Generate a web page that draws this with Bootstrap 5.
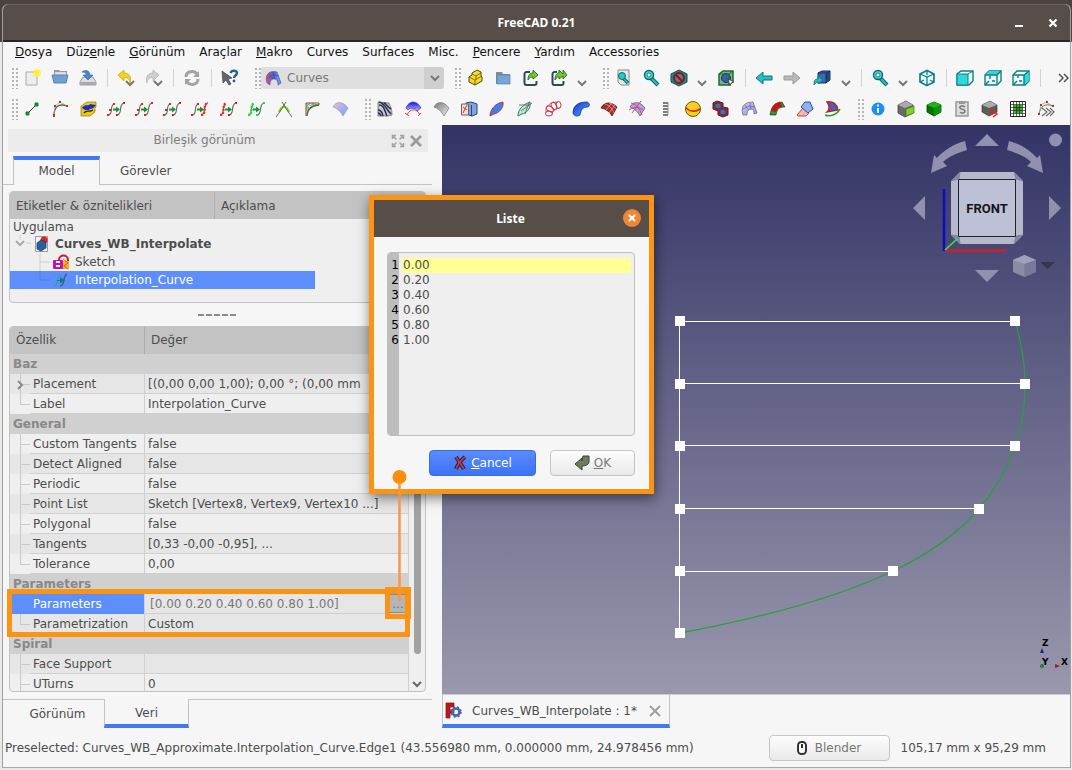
<!DOCTYPE html>
<html lang="tr">
<head>
<meta charset="utf-8">
<meta name="viewport" content="width=device-width, initial-scale=1">
<title>FreeCAD 0.21</title>
<link href="https://cdn.jsdelivr.net/npm/bootstrap@5.3.0/dist/css/bootstrap.min.css" rel="stylesheet">
<style>
  :root { --ink:#4d4d4d; --line:#c3c3c3; --accent:#4478f0; --mark:#fb9313; }
  body { font:12px/18px "DejaVu Sans", sans-serif; color:var(--ink);
         background:linear-gradient(#4c4341 42px,#e9e9e9 42px); padding:4px 2px 2px 3px; }
  a { color:inherit; text-decoration:none; }
  button { font:inherit; color:inherit; }
  .no-min { min-width:0; min-height:0; }
  .app-window { background:#f6f6f6; border-bottom:1px solid #a8a8a8; border-radius:6px 6px 0 0; overflow:hidden; box-shadow:-1px 0 #a0a0a0,1px 0 #a0a0a0; }
  .title-bar { height:38px; background:#574e49; border-top:1px solid #6d6561; border-bottom:2px solid #2b2523; }
  .caption-text { font:bold 12px/18px "Noto Sans", sans-serif; color:#fff; }
  .caption-btn { width:34px; height:34px; }
  .menu-row { height:20px; gap:14px; padding-left:12px; color:#111; line-height:20px; }
  .tool-row { height:31px; }
  .tool-row + .tool-row { height:32px; }
  .grip { flex:none; width:15px; height:22px; margin-left:2px; padding-left:8px; background:radial-gradient(circle,#b5b5b5 1px,transparent 1px) content-box 0 0/4px 4px; }
  .grip:first-child { margin-left:0; }
  .tool { flex:none; width:28px; height:28px; padding:0; border:0; display:grid; place-content:center; }
  .tool svg { width:18px; height:18px; display:block; }
  .tool-wide { width:31px; }
  .tool-drop { flex:none; width:19px; height:28px; padding:10px 0 0; border:0; }
  .tool-drop svg { width:18px; height:18px; display:block; }
  .rule { flex:none; width:10px; height:18px; background:linear-gradient(#d2d2d2,#d2d2d2) center/1px 100% no-repeat; }
  .bench { flex:none; width:183px; height:22px; background:linear-gradient(90deg,#dfdfdf 163px,#cfcfcf 163px); border-radius:3px; padding-left:3px; }
  .bench svg { width:18px; height:18px; flex:none; }
  .bench select { background:transparent; color:#777; appearance:none; height:22px; padding:0 0 0 5px; font:inherit; outline:0; }
  .side { flex:none; width:439px; }
  .dock-title { height:23px; margin:4px 14px 0 5px; background:#ebebeb; color:#7d7d7d; line-height:23px; gap:4px; padding-right:5px; }
  .dock-name { padding-left:14px; }
  .dock-tabs { height:29px; margin:4px 10px 0 0; padding-left:10px; background:linear-gradient(var(--line),var(--line)) bottom/100% 1px no-repeat; }
  .tab-on { width:87px; background:#f6f6f6; border:solid var(--line); border-width:0 1px; border-top:4px solid var(--accent); line-height:22px; }
  .tab-off { line-height:30px; padding-left:20px; }
  .box { margin:0 16px 0 6px; border:1px solid var(--line); border-radius:4px; background:#efefef; overflow:hidden; }
  .tree-box { margin-top:6px; height:112px; }
  .head-row { height:27px; line-height:28px; background:#c3c3c3; }
  .head-row > div { padding-left:6px; }
  .tree-col { flex:none; width:205px; border-right:1px solid #aeaeae; }
  .tree-root { line-height:16px; padding-left:3px; }
  .tree-item { height:18px; gap:5px; }
  .tree-picked { background:#5d8ffc; color:#fff; width:305px; }
  .splitter { height:23px; margin-right:11px; background:repeating-linear-gradient(90deg,#8b8b8b 0 6px,transparent 6px 8px) center/38px 2px no-repeat; }
  .props { table-layout:fixed; border-collapse:separate; border-spacing:0; line-height:20px; }
  .props th, .props td { height:20px; padding:0 0 0 3px; font-weight:400; white-space:nowrap; overflow:hidden; vertical-align:top; }
  .props thead th { height:27px; line-height:27px; background:#c3c3c3; padding-left:6px; }
  .props thead th:first-child { width:135px; border-right:1px solid #aeaeae; }
  .props td { border-right:1px solid #cfcfcf; background:linear-gradient(#cfcfcf,#cfcfcf) bottom/100% 1px no-repeat; }
  .props tbody th { border-right:1px solid #cfcfcf; padding-left:23px;
    background:linear-gradient(#cfcfcf,#cfcfcf) 20px 19px/200px 1px no-repeat,
      linear-gradient(#c9c9c9,#c9c9c9) 10px 10px/10px 1px no-repeat,
      linear-gradient(#c9c9c9,#c9c9c9) 10px 0/1px 20px no-repeat; }
  .props tbody tr.last-leaf th { background-size:200px 1px,10px 1px,1px 10px; }
  .props tbody tr.sec th { background:#d0d0d0; color:#888; font-weight:700; padding-left:3px; border:0; }
  .props tr.alt { background:#e6e6e6; }
  .props tbody tr.hot th { background:#5d8ffc; color:#fff; }
  .twisty { margin-left:-18px; width:10px; height:10px; margin-right:8px; }
  .edit-line { background:transparent; color:#777; padding:0 0 0 2px; height:19px; outline:0; font:inherit; min-width:0; }
  .more { width:20px; height:19px; background:#b5b5b5; border:1px solid #8b8b8b; color:#777; line-height:12px; padding:0; }
  .scroll-lane { flex:none; width:16px; padding-bottom:2px; }
  .scroll-thumb { width:7px; margin-bottom:27px; background:#a2a2a2; border-radius:4px; }
  .foot-tabs { height:29px; margin:7px 10px 0 0; line-height:29px; }
  .foot-off { width:101px; border-top:1px solid var(--line); padding-left:8px; }
  .foot-on { width:85px; border:solid var(--line); border-width:0 1px; border-bottom:4px solid var(--accent); }
  .foot-fill { border-top:1px solid var(--line); }
  .scene { background:linear-gradient(#333366,#9a98ad); }
  .doc-tabs { height:34px; border-top:1px solid #ccc; }
  .doc-tab { width:228px; border:solid var(--line); border-width:0 1px; border-bottom:4px solid var(--accent); padding:2px 0 0 2px; }
  .doc-name { padding-left:10px; }
  .status { height:39px; padding:0 24px 0 2px; gap:11px; }
  .soft-btn { height:26px; border:1px solid #c6c6c6; border-radius:4px; background:linear-gradient(#fdfdfd,#e9e9e9); color:#777; padding:0; }
  .w-blend { width:121px; }
  .mark-rows { left:4px; top:464px; width:403px; height:48px; border:5px solid var(--mark); pointer-events:none; }
  .mark-more { left:382px; top:462px; width:26px; height:32px; border:5px solid var(--mark); pointer-events:none; }
  .mark-lead { left:387px; top:343px; width:20px; height:140px; z-index:5; pointer-events:none; }
  .list-dialog { left:366px; top:70px; width:285px; height:299px; border:5px solid var(--mark); background:#f6f6f6; box-shadow:1px 4px 12px rgba(0,0,0,.5); z-index:4; }
  .list-title { height:37px; background:#574e49; padding-right:2px; }
  .list-title button { right:8px; top:9px; width:18px; height:18px; }
  .list-edit { margin:15px 14px 14px 13px; border:1px solid #bdbdbd; border-radius:4px; background:#efefef; line-height:15px; overflow:hidden; }
  .list-nums { width:11px; background:#bdbdbd; color:#000; padding-top:5px; }
  .list-text { resize:none; outline:0; color:var(--ink); padding:5px 0 0 4px; line-height:15px; overflow:hidden; background:linear-gradient(#ffff96,#ffff96) 3px 5px/calc(100% - 6px) 15px no-repeat; }
  .list-actions { gap:14px; padding:0 14px 13px 0; }
  .w-cancel { width:107px; background:linear-gradient(#5a8bff,#3c73f5); border-color:#3a6de0; color:#fff; }
  .w-ok { width:85px; }
</style>
</head>
<body class="vh-100 overflow-hidden">

<svg width="0" height="0" class="position-absolute" aria-hidden="true">
  <defs>
    <linearGradient id="gRB" x1="0" x2="1"><stop stop-color="#e0506a"/><stop offset=".5" stop-color="#4a62e0"/><stop offset="1" stop-color="#7fa4ee"/></linearGradient>
    <linearGradient id="gBlue" x1="0" x2="1" y2="1"><stop stop-color="#1030d8"/><stop offset="1" stop-color="#4fb4ff"/></linearGradient>
    <linearGradient id="gGrey" x1="0" x2="1" y2="1"><stop stop-color="#777"/><stop offset="1" stop-color="#eee"/></linearGradient>
    <linearGradient id="gDome" x1="0" x2="0" y2="1"><stop stop-color="#1212e8"/><stop offset="1" stop-color="#b8c0ff"/></linearGradient>
    <linearGradient id="gLav" x1="0" x2="1" y2="1"><stop stop-color="#f0c0d0"/><stop offset=".5" stop-color="#a9aef0"/><stop offset="1" stop-color="#7fa0f0"/></linearGradient>
  </defs>
  <symbol id="i-new" viewBox="0 0 18 18"><path d="M3 3h11v13H3z" fill="#ededed" stroke="#aaa"/><circle cx="14" cy="4" r="4" fill="#fff04a" opacity=".8"/><circle cx="14" cy="4" r="2" fill="#fff200"/></symbol>
  <symbol id="i-open" viewBox="0 0 18 18"><path d="M3 1h5l1 1h7v10H3z" fill="#9a9a9a"/><path d="M4 3h11v6H4z" fill="#ddd"/><path d="M1 6h16l-2 8H3z" fill="#6f9fd3" stroke="#5585bb"/></symbol>
  <symbol id="i-save" viewBox="0 0 18 18"><path d="M4 8h10l3 5v3H1v-3z" fill="#ddd" stroke="#999"/><path d="M1.500 13h15v3h-15z" fill="#aaa"/><path d="M3 3c4-3 8-1 8 3h3l-5 5-5-5h3c0-2-1-3-4-3z" fill="#4c86c6" stroke="#33669c" stroke-width=".6"/></symbol>
  <symbol id="i-undo" viewBox="0 0 18 18"><path d="M1 6l6-5v3c5 0 8 4 6 10 0-4-3-6-6-5v3z" fill="#f3d21e" stroke="#c6a412" stroke-width=".7"/><path d="M9 12l4 4 4-4" fill="none" stroke="#777" stroke-width="2"/></symbol>
  <symbol id="i-redo" viewBox="0 0 18 18"><path d="M14 6L8 1v3C3 4 0 8 2 14c0-4 3-6 6-5v3z" fill="#cfcfcf" stroke="#b0b0b0" stroke-width=".7"/><path d="M9 12l4 4 4-4" fill="none" stroke="#777" stroke-width="2"/></symbol>
  <symbol id="i-refresh" viewBox="0 0 18 18"><path d="M3 8c0-6 8-7 11-3M15 10c0 6-8 7-11 3" fill="none" stroke="#a3a3a3" stroke-width="3"/><path d="M16 2v6h-6zM2 16v-6h6z" fill="#a3a3a3"/></symbol>
  <symbol id="i-what" viewBox="0 0 18 18"><path d="M1 2l1 12 3-3 3 5 2-1-3-5 4-1z" fill="#5f676c" stroke="#333" stroke-width=".6"/><path d="M9.500 4c1-3 6-3 6.500 0 0 2.500-3 2.500-3 5" fill="none" stroke="#2a5d9c" stroke-width="2.400"/><circle cx="13" cy="12" r="1.400" fill="#2a5d9c"/></symbol>
  <symbol id="i-bench" viewBox="0 0 18 18"><path d="M3 14C0 5 6 1 13 3l4 11-3 2c0-4-1-6-4-6s-4 2-4 6z" fill="url(#gRB)" stroke="#5b5b8b" stroke-width=".7"/><path d="M5 5l4 5M9 3l2 7M3 9l6-3 6 1" fill="none" stroke="#444a90" stroke-width=".6"/></symbol>
  <symbol id="i-part" viewBox="0 0 18 18"><path d="M3 8l3-2V4l5-3 4 2v4l1 1v4l-7 4-6-3z" fill="#f3d929" stroke="#54490a"/><path d="M3 8l6 3 7-4M9 11v5M6 5l4 2 5-3M10 7v3" fill="none" stroke="#54490a" stroke-width=".7"/></symbol>
  <symbol id="i-group" viewBox="0 0 18 18"><path d="M2 3h6l1 2h7v10H2z" fill="#8c8c8c"/><path d="M3 6h13v9H3z" fill="#76a6d9" stroke="#4f7eb0" stroke-width=".7"/></symbol>
  <symbol id="i-link" viewBox="0 0 18 18"><path d="M8 3H4.500A2 2 0 0 0 2.500 5v9a2 2 0 0 0 2 2h8a2 2 0 0 0 2-2v-2" fill="none" stroke="#31475e" stroke-width="2"/><path d="M6 11c0-5 2-7 5-7V1l5 5-5 4V8c-2 0-3 0-5 3z" fill="#6fc62e" stroke="#20590f" stroke-width=".8"/></symbol>
  <symbol id="i-link2" viewBox="0 0 18 18"><path d="M7 3H4.500A2 2 0 0 0 2.500 5v9a2 2 0 0 0 2 2h7a2 2 0 0 0 2-2v-2" fill="none" stroke="#31475e" stroke-width="2"/><path d="M5 11c0-5 2-7 4-7V1l4 4V1l4 5-4 4V7l-4 3V8c-2 0-2 0-4 3z" fill="#6fc62e" stroke="#20590f" stroke-width=".8"/></symbol>
  <symbol id="i-drop" viewBox="0 0 18 18"><path d="M5 7l4 4 4-4" fill="none" stroke="#777" stroke-width="2"/></symbol>
  <symbol id="i-fit" viewBox="0 0 18 18"><path d="M4 1h11v15H7l-3-3z" fill="#e9e9e9" stroke="#888"/><path d="M9 9l5 5" stroke="#0b6c70" stroke-width="3.500"/><path d="M9 9l4.500 4.500" stroke="#29c9c9" stroke-width="1.500"/><circle cx="8" cy="7" r="3.500" fill="#29c9c9" stroke="#0b6c70"/></symbol>
  <symbol id="i-zoom" viewBox="0 0 18 18"><path d="M9 9l7 7" stroke="#096569" stroke-width="4"/><path d="M9 9l6.500 6.500" stroke="#25c2c6" stroke-width="2"/><circle cx="7" cy="6" r="4.500" fill="#43dde0" stroke="#096569" stroke-width="1.400"/><circle cx="7" cy="6" r="2" fill="#f0ffff" stroke="#096569" stroke-width=".8"/></symbol>
  <symbol id="i-style" viewBox="0 0 18 18"><path d="M1 5l8-4 8 4v8l-8 4-8-4z" fill="#168a90" stroke="#0a4e54"/><circle cx="9" cy="9" r="5" fill="#6b7682" stroke="#8f1414" stroke-width="2"/><path d="M5.500 5.500l7 7" stroke="#8f1414" stroke-width="2"/></symbol>
  <symbol id="i-boxsel" viewBox="0 0 18 18"><path d="M2 5l4-3h10v10l-4 4H2z" fill="#7fae93" stroke="#16702d" stroke-width="1.500"/><circle cx="9" cy="9" r="4.500" fill="#3c5f9e" stroke="#1e3567"/><path d="M2 5h10v11M12 5l4-3" fill="none" stroke="#16702d"/><path d="M11 10l6 3-3 1-1 3z" fill="#fff" stroke="#222" stroke-width=".7"/></symbol>
  <symbol id="i-back" viewBox="0 0 18 18"><path d="M1 9l7-6v4h9v4H8v4z" fill="#22bfc4" stroke="#0a777b"/></symbol>
  <symbol id="i-fwd" viewBox="0 0 18 18"><path d="M17 9l-7-6v4H1v4h9v4z" fill="#b8b8b8" stroke="#9d9d9d"/></symbol>
  <symbol id="i-goto" viewBox="0 0 18 18"><path d="M5 4l4-2h8v9l-4 3H5z" fill="#3f69ad" stroke="#17305b"/><path d="M13 4l4-2v9l-4 3z" fill="#234680"/><path d="M5 4h8v10M13 4l4-2" fill="none" stroke="#17305b"/><path d="M1 16c0-5 1-6 4-6V7l5 4-5 4v-2c-2 0-2 1-4 3z" fill="#27b6bb" stroke="#0a6a6e" stroke-width=".7"/></symbol>
  <symbol id="i-iso" viewBox="0 0 18 18"><path d="M2 5l7-3.500L16 5v8l-7 3.500L2 13z" fill="#eafcfc" stroke="#0d7e84" stroke-width="1.700"/><path d="M2 5l7 3 7-3M9 8v8.500M9 1.500V6M2 13l4-2M16 13l-4-2" fill="none" stroke="#0d7e84" stroke-width="1.300"/></symbol>
  <symbol id="i-front" viewBox="0 0 18 18"><path d="M1 5l4-3h12v10l-4 4H1z" fill="#eafcfc" stroke="#0d7e84" stroke-width="1.400"/><path d="M1 5h11v11H1z" fill="#2bd9dd" stroke="#0d7e84"/><path d="M12 5l5-3" stroke="#0d7e84"/></symbol>
  <symbol id="i-top" viewBox="0 0 18 18"><path d="M1 6l4-4h12v10l-4 4H1z" fill="#eafcfc" stroke="#0d7e84" stroke-width="1.400"/><path d="M1 6l4-4h12l-4 4z" fill="#2bd9dd"/><path d="M1 6h12v10M13 6l4-4M6 7v3M1 16l4-4M8 12h3" fill="none" stroke="#0d7e84" stroke-width="1.400"/></symbol>
  <symbol id="i-right" viewBox="0 0 18 18"><path d="M1 6l4-4h12v10l-4 4H1z" fill="#eafcfc" stroke="#0d7e84" stroke-width="1.400"/><path d="M12 6l5-4v10l-5 4z" fill="#2bd9dd"/><path d="M1 6h11v10M12 6l5-4M6 6v3M1 16l4-4M7 12h3" fill="none" stroke="#0d7e84" stroke-width="1.400"/></symbol>
  <symbol id="i-line" viewBox="0 0 18 18"><path d="M4 14L14 4" stroke="#333"/><path d="M3 12h3v3H3zM12 3h3v3h-3z" fill="#138a2a" stroke="#138a2a"/></symbol>
  <symbol id="i-editsp" viewBox="0 0 18 18"><path d="M3 16C3 7 7 3 16 6" fill="none" stroke="#357a35" stroke-width="1.300"/><path d="M3 15L4 6l5-4 7 4" fill="none" stroke="#9a9a9a" stroke-width=".8"/><path d="M2 14h2v3H2zM3 5h2v2H3zM8 1h2v2H8zM15 5h2v2h-2z" fill="#d22"/></symbol>
  <symbol id="i-join" viewBox="0 0 18 18"><path d="M2 6l6-4h9v5l-1 1v4l-5 4H2v-5z" fill="#f0c612" stroke="#7b6810" stroke-width=".6"/><path d="M3 8c3-5 6-1 8-4l6 1c-3 5-6 3-7 5H6z" fill="#1732c9"/><path d="M5 13c3-4 5 0 9-3" fill="none" stroke="#222" stroke-width="1.300"/></symbol>
  <symbol id="i-sp" viewBox="0 0 18 18"><path d="M1 15C7 15 2 6 7 4M10 15C16 15 11 4 17 3" fill="none" stroke="#666" stroke-width="1.100"/><path d="M6 8.500h3V6.500l4 3-4 3V10.500H6z" fill="#1a8f2c"/></symbol>
  <symbol id="i-sp1" viewBox="0 0 18 18"><use href="#i-sp"/><path d="M0 14h2v2H0zM2 9h2v2H2zM6 3h2v2H6zM9 14h2v2H9zM16 2h2v2h-2z" fill="#e02020"/></symbol>
  <symbol id="i-sp2" viewBox="0 0 18 18"><use href="#i-sp"/><path d="M1 15C7 15 2 6 7 3" fill="none" stroke="#f02828" stroke-width="2.200" stroke-dasharray="2 1"/><path d="M9 14h2v2H9zM16 2h2v2h-2z" fill="#e02020"/></symbol>
  <symbol id="i-sp3" viewBox="0 0 18 18"><use href="#i-sp"/><path d="M10 15C16 15 11 4 17 3" fill="none" stroke="#f02828" stroke-width="2.400" stroke-dasharray="2 1"/><path d="M0 14h2v2H0zM6 3h2v2H6z" fill="#e02020"/></symbol>
  <symbol id="i-sp4" viewBox="0 0 18 18"><use href="#i-sp"/><path d="M1 15C7 15 2 6 7 3" fill="none" stroke="#20e040" stroke-width="2.400" stroke-dasharray="2 1"/><path d="M9 14h2v2H9zM16 2h2v2h-2z" fill="#20e040"/></symbol>
  <symbol id="i-blend" viewBox="0 0 18 18"><path d="M4 12C7 5 11 5 14 12" fill="none" stroke="#7ae01a" stroke-width="2.200"/><path d="M1 17c4-5 6-9 10-15M17 17C13 12 11 8 7 2" fill="none" stroke="#555" stroke-width=".9"/></symbol>
  <symbol id="i-comb" viewBox="0 0 18 18"><path d="M4 16C4 9 9 5 16 5" fill="none" stroke="#236b23" stroke-width="1.400"/><path d="M3 16V3h13v2" fill="none" stroke="#b0453a"/><path d="M3 3l7 4M3 3l4 7M3 5l3 6M6 3l7 3M3 8l2 5M9 3l5 2" stroke="#54845a" fill="none" stroke-width=".8"/></symbol>
  <symbol id="i-fan" viewBox="0 0 18 18"><path d="M2 7C5 1 12 1 17 8l-5 8C10 12 6 8 2 7z" fill="url(#gLav)" stroke="#8890b0" stroke-width=".6"/></symbol>
  <symbol id="i-zebra" viewBox="0 0 18 18"><path d="M2 2l11 1c1 3 3 5 3 12l-4 1H2z" fill="#c5c8d4" stroke="#444" stroke-width=".6"/><path d="M3 5c5 0 5 4 8 11M2 10c4 0 4 3 5 6M3 2c6 1 6 6 12 12M8 3c3 1 3 4 7 6M2 13c2 0 2 1 3 3" fill="none" stroke="#2b3144" stroke-width="1.500"/></symbol>
  <symbol id="i-trim" viewBox="0 0 18 18"><path d="M2 8C5 0 13 0 17 8l-4 3C12 8 7 7 4 10z" fill="url(#gDome)" stroke="#222299" stroke-width=".6"/><path d="M3 15c3-7 10-7 13 0M1 13l4 3M14 16l3-3" fill="none" stroke="#e33"/></symbol>
  <symbol id="i-gfan" viewBox="0 0 18 18"><path d="M2 7C5 1 12 1 17 8l-5 8C10 12 6 8 2 7z" fill="url(#gGrey)" stroke="#777" stroke-width=".7"/></symbol>
  <symbol id="i-map" viewBox="0 0 18 18"><path d="M6 3l5-1 6 2v10l-5 2-6-2z" fill="#7ea6dd" stroke="#29486f"/><path d="M1.500 4h7v11h-7z" fill="#f3dede" stroke="#666"/><path d="M3 13l4-8M3 7l4 3" stroke="#d33"/><path d="M11.500 5v11" stroke="#29486f"/></symbol>
  <symbol id="i-loft" viewBox="0 0 18 18"><path d="M2 16C2 10 7 3 15 2c1 6-4 11-9 12z" fill="#3f7fe8" stroke="#c8324d"/></symbol>
  <symbol id="i-profile" viewBox="0 0 18 18"><path d="M2 16C2 10 6 5 14 2c1 6-3 11-8 12z" fill="#b9f0bd" stroke="#3c6b8b"/><path d="M3 5h10M5 11l11-8M13 3l-4 11" fill="none" stroke="#666" stroke-width=".9"/></symbol>
  <symbol id="i-pipe" viewBox="0 0 18 18"><path d="M2 13C1 6 6 2 14 2M8 15c0-5 3-7 8-7" fill="none" stroke="#888"/><g fill="none" stroke="#d8304e"><ellipse cx="5" cy="13.500" rx="3.500" ry="2.500"/><ellipse cx="6" cy="9" rx="4" ry="2.500" transform="rotate(30 6 9)"/><ellipse cx="10" cy="6" rx="2.500" ry="4" transform="rotate(-25 10 6)"/><ellipse cx="14.500" cy="5" rx="2.500" ry="3.500"/></g></symbol>
  <symbol id="i-sweep" viewBox="0 0 18 18"><path d="M1 13C1 5 7 2 15 2c3 1 3 4 1 5-6 0-7 3-8 8-3 2-6 1-7-2z" fill="url(#gBlue)" stroke="#102070" stroke-width=".7"/></symbol>
  <symbol id="i-gordon" viewBox="0 0 18 18"><path d="M1 8C4 2 11 1 17 7l-5 9C10 12 6 9 1 8z" fill="#a82c2c" stroke="#3d0d0d" stroke-width=".7"/><path d="M5 4c4 1 7 4 9 9M9 3c3 1 5 3 7 6M6 10l6-7M9 13l6-8" fill="none" stroke="#e8a0a0" stroke-width=".8"/></symbol>
  <symbol id="i-segment" viewBox="0 0 18 18"><path d="M2 7C5 1 12 1 17 8l-5 8C10 12 6 8 2 7z" fill="#a9a5ee" stroke="#556" stroke-width=".7"/><path d="M3 3c5 1 9 6 11 12M4 13l9-12M1 10c6-4 11-3 15 1" fill="none" stroke="#e04060"/></symbol>
  <symbol id="i-coil" viewBox="0 0 18 18"><path d="M7 3h5M7 6h5M7 9h5M7 12h5M7 15h5" stroke="#555" stroke-width="1.600"/><path d="M12 2v13" stroke="#888" stroke-width=".8"/></symbol>
  <symbol id="i-ball" viewBox="0 0 18 18"><circle cx="9" cy="9" r="7.500" fill="#f5cf1c" stroke="#6b5a0e"/><path d="M2 8c4 4 10 4 14 1" fill="none" stroke="#d62a1a" stroke-width="1.600"/></symbol>
  <symbol id="i-compound" viewBox="0 0 18 18"><path d="M1 3l4-2 6 2v4l5 1v7l-5 2-5-2v-4l-5-2z" fill="#a7242c" stroke="#6a1219"/><path d="M3 4l3-1 3 1v4L6 9 3 8zM8 10l3-1 3 1v4l-3 1-3-1z" fill="#426fa8" stroke="#1d3558" stroke-width=".7"/></symbol>
  <symbol id="i-reflect" viewBox="0 0 18 18"><path d="M3 15C0 6 5 2 13 2l4 11-3 1c0-4-1-5-3-5s-4 2-4 6z" fill="url(#gLav)" stroke="#667" stroke-width=".7"/><path d="M5 5l4 5M10 3l1 7M3 9l6-3 6 1" fill="none" stroke="#558" stroke-width=".6"/></symbol>
  <symbol id="i-blendsurf" viewBox="0 0 18 18"><path d="M2 15C3 7 7 2 14 2l3 5c-6 0-8 2-9 8z" fill="#23a02b" stroke="#222" stroke-width=".6"/><path d="M3 11C4 6 7 2 13 2l1 5c-4 0-5 2-6 5z" fill="#c51616"/></symbol>
  <symbol id="i-rotsweep" viewBox="0 0 18 18"><path d="M1 15l6-7 6 5-3 3H2z" fill="#f3b6b6" stroke="#b44"/><path d="M5 7l4-5 5 0 3 7-5 4z" fill="#8fb2ef" stroke="#2c4f9b"/></symbol>
  <symbol id="i-flat" viewBox="0 0 18 18"><path d="M3 2c6-1 10 2 11 8L3 12c3-3 3-6 0-10z" fill="#4463ad" stroke="#c02020" stroke-width="1.400"/><path d="M1 15c5 2 12 0 15-6" fill="none" stroke="#23a02b" stroke-width="1.500"/></symbol>
  <symbol id="i-info" viewBox="0 0 18 18"><circle cx="9" cy="9" r="6.500" fill="#1e8ff0"/><path d="M9 8v5M9 4.500v2" stroke="#fff" stroke-width="1.800"/></symbol>
  <symbol id="i-cubeface" viewBox="0 0 18 18"><path d="M1 5l8-4 7 4v8l-8 4-7-4z" fill="#6b6b6b" stroke="#333" stroke-width=".7"/><path d="M1 5l8-4 7 4-8 3z" fill="#aaa"/><path d="M9 9l8-3v7l-8 3z" fill="#7bd321" stroke="#3c7310" stroke-width=".7"/></symbol>
  <symbol id="i-cubegreen" viewBox="0 0 18 18"><path d="M2 5l7-3 7 3v7l-7 4-7-4z" fill="#067506" stroke="#043c04" stroke-width=".8"/><path d="M2 5l7-3 7 3-7 3z" fill="#16b816"/><path d="M9 8l7-3v7l-7 4z" fill="#0a930a"/></symbol>
  <symbol id="i-clip" viewBox="0 0 18 18"><path d="M3 2h12v14H3z" fill="#ddd" stroke="#999" stroke-width="1.500"/><path d="M6 1h6v3H6z" fill="#999"/><path d="M12 7c-2-2-6-1-5 1s5 1 5 3-3 3-5 1" fill="none" stroke="#777" stroke-width="1.500"/></symbol>
  <symbol id="i-cubered" viewBox="0 0 18 18"><path d="M1 5l8-4 7 4v7l-8 4-7-4z" fill="#5c5c5c" stroke="#333" stroke-width=".7"/><path d="M1 5l8-4 7 4-8 3z" fill="#aaa"/><path d="M9 9l4 3-4 3M12 11l4 3-4 3" fill="none" stroke="#e02020" stroke-width="1.500"/></symbol>
  <symbol id="i-net" viewBox="0 0 18 18"><path d="M1.500 1.500h15v15h-15z" fill="#fff" stroke="#222"/><path d="M5 5h8v8H5z" fill="#15c815"/><path d="M4.500 1v16M7.500 1v16M10.500 1v16M13.500 1v16M1 4.500h16M1 7.500h16M1 10.500h16M1 13.500h16" stroke="#222" stroke-width=".7"/><path d="M8 8h2v2H8z" fill="#e22"/></symbol>
  <symbol id="i-speed" viewBox="0 0 18 18"><path d="M2 15C3 6 8 3 16 6" fill="none" stroke="#3a8a3a"/><path d="M2 14L4 5l5-3 7 4" fill="none" stroke="#999" stroke-width=".7"/><path d="M1 13h2v2H1zM3 4h2v2H3zM9 1h2v2H9zM15 5h2v2h-2z" fill="#d22"/><path d="M5 8l5 4-5 4M9 8l5 4-5 4M13 8l4 4-4 4" fill="none" stroke="#666" stroke-width="1.100"/></symbol>
</svg>

<div class="app-window d-flex flex-column h-100 position-relative">
  <header class="title-bar d-flex align-items-center flex-shrink-0 position-relative">
    <div class="caption-text flex-fill text-center">FreeCAD 0.21</div>
    <div class="position-absolute end-0 d-flex">
      <button class="caption-btn btn p-0 border-0" aria-label="Küçült"><svg width="12" height="12"><path d="M2 9h8" stroke="#fff" stroke-width="2"/></svg></button>
      <button class="caption-btn btn p-0 border-0" aria-label="Kapat"><svg width="12" height="12"><path d="M2.500 2.500l7 7M9.500 2.500l-7 7" stroke="#fff" stroke-width="2.200"/></svg></button>
    </div>
  </header>

  <nav class="menu-row d-flex flex-shrink-0">
    <a href="#"><u>D</u>osya</a><a href="#">Düz<u>e</u>nle</a><a href="#"><u>G</u>örünüm</a><a href="#">Araçlar</a><a href="#"><u>M</u>akro</a><a href="#">Curves</a><a href="#">Surfaces</a><a href="#">Misc.</a><a href="#"><u>P</u>encere</a><a href="#"><u>Y</u>ardım</a><a href="#">Accessories</a>
  </nav>

  <div class="tool-row d-flex align-items-center flex-shrink-0">
    <span class="grip"></span>
    <button class="btn tool" aria-label="Yeni"><svg><use href="#i-new"/></svg></button>
    <button class="btn tool" aria-label="Aç"><svg><use href="#i-open"/></svg></button>
    <button class="btn tool" aria-label="Kaydet"><svg><use href="#i-save"/></svg></button>
    <span class="rule"></span>
    <button class="btn tool" aria-label="Geri al"><svg><use href="#i-undo"/></svg></button>
    <button class="btn tool" aria-label="Yinele"><svg><use href="#i-redo"/></svg></button>
    <span class="rule"></span>
    <button class="btn tool" aria-label="Yenile"><svg><use href="#i-refresh"/></svg></button>
    <span class="rule"></span>
    <button class="btn tool" aria-label="Bu nedir?"><svg><use href="#i-what"/></svg></button>
    <span class="grip"></span>
    <div class="bench d-flex align-items-center">
      <svg><use href="#i-bench"/></svg>
      <select class="flex-fill border-0" aria-label="Tezgâh"><option>Curves</option></select>
      <svg><use href="#i-drop"/></svg>
    </div>
    <span class="grip"></span>
    <button class="btn tool" aria-label="Parça"><svg><use href="#i-part"/></svg></button>
    <button class="btn tool" aria-label="Grup"><svg><use href="#i-group"/></svg></button>
    <button class="btn tool" aria-label="Bağlantı"><svg><use href="#i-link"/></svg></button>
    <button class="btn tool" aria-label="Alt bağlantı"><svg><use href="#i-link2"/></svg></button>
    <button class="btn tool-drop" aria-label="Bağlantı seçenekleri"><svg><use href="#i-drop"/></svg></button>
    <span class="grip"></span>
    <button class="btn tool" aria-label="Tümünü sığdır"><svg><use href="#i-fit"/></svg></button>
    <button class="btn tool" aria-label="Seçimi sığdır"><svg><use href="#i-zoom"/></svg></button>
    <button class="btn tool" aria-label="Çizim biçimi"><svg><use href="#i-style"/></svg></button>
    <button class="btn tool-drop" aria-label="Biçimler"><svg><use href="#i-drop"/></svg></button>
    <button class="btn tool" aria-label="Kutu seçimi"><svg><use href="#i-boxsel"/></svg></button>
    <span class="rule"></span>
    <button class="btn tool" aria-label="Geri"><svg><use href="#i-back"/></svg></button>
    <button class="btn tool" aria-label="İleri"><svg><use href="#i-fwd"/></svg></button>
    <button class="btn tool tool-wide" aria-label="Nesneye git"><svg><use href="#i-goto"/></svg></button>
    <button class="btn tool-drop" aria-label="Git seçenekleri"><svg><use href="#i-drop"/></svg></button>
    <span class="rule"></span>
    <button class="btn tool" aria-label="Yakınlaştır"><svg><use href="#i-zoom"/></svg></button>
    <button class="btn tool-drop" aria-label="Yakınlaştırma seçenekleri"><svg><use href="#i-drop"/></svg></button>
    <button class="btn tool" aria-label="İzometrik"><svg><use href="#i-iso"/></svg></button>
    <span class="rule"></span>
    <button class="btn tool" aria-label="Ön"><svg><use href="#i-front"/></svg></button>
    <button class="btn tool" aria-label="Üst"><svg><use href="#i-top"/></svg></button>
    <button class="btn tool" aria-label="Sağ"><svg><use href="#i-right"/></svg></button>
    <span class="rule"></span>
    <button class="btn p-0 border-0 ms-auto" aria-label="Daha fazla"><svg width="13" height="12" class="d-block"><path d="M2 2l4 4-4 4M7 2l4 4-4 4" fill="none" stroke="#555" stroke-width="1.500"/></svg></button>
  </div>

  <div class="tool-row d-flex align-items-center flex-shrink-0" id="curveTools"></div>

  <main class="d-flex flex-fill position-relative no-min">
    <section class="side d-flex flex-column">
      <div class="dock-title d-flex flex-shrink-0 align-items-center">
        <span class="dock-name flex-fill text-center">Birleşik görünüm</span>
        <button class="btn p-0 border-0" aria-label="Ayır"><svg width="14" height="14" class="d-block" fill="none" stroke="#a3a3a3" stroke-width="1.500"><path d="M1.500 5V1.500H5M2 2l3.500 3.500M9 1.500h3.500V5M12 2L8.500 5.500M1.500 9v3.500H5M2 12l3.500-3.500M9 12.500h3.500V9M12 12L8.500 8.500"/></svg></button>
        <button class="btn p-0 border-0" aria-label="Kapat"><svg width="14" height="14" class="d-block"><path d="M2 2l10 10M12 2L2 12" stroke="#999" stroke-width="2.500"/></svg></button>
      </div>
      <nav class="dock-tabs d-flex flex-shrink-0"><a href="#" class="tab-on text-center">Model</a><a href="#" class="tab-off">Görevler</a></nav>

      <div class="box tree-box flex-shrink-0">
        <div class="head-row d-flex"><div class="tree-col">Etiketler &amp; öznitelikleri</div><div>Açıklama</div></div>
        <div class="tree-root">Uygulama</div>
        <div class="tree-item d-flex align-items-center fw-bold"><svg width="40" height="18" class="flex-shrink-0"><path d="M10 0v5M16 8h5" stroke="#ccc"/><path d="M6 6l4 4 4-4" fill="none" stroke="#aaa" stroke-width="2"/><path d="M25.500 1.500h12v15h-12z" fill="#f4f4f4" stroke="#999"/><circle cx="34" cy="5" r="3.500" fill="#d22"/><path d="M27 8l4-3 5 2v6l-5 3-4-2z" fill="#2d5f99" stroke="#17365c" stroke-width=".7"/></svg>Curves_WB_Interpolate</div>
        <div class="tree-item d-flex align-items-center"><svg width="60" height="18" class="flex-shrink-0"><path d="M30 0v18M30 9h10" stroke="#ccc"/><path d="M49 7c0-6 9-6 9 0v9" fill="none" stroke="#d01828" stroke-width="2"/><path d="M52 8h7v8h-7z" fill="#f4b61a"/><path d="M53 6l5 4-4 3 4 3" stroke="#e05a10" fill="none"/><rect x="43" y="7" width="10" height="9" rx="1" fill="#c313b5"/><path d="M46 8h4v2h-4zM46 12h4v2h-4z" fill="#fff"/></svg>Sketch</div>
        <div class="tree-item tree-picked d-flex align-items-center"><svg width="60" height="18" class="flex-shrink-0"><path d="M30 0v9h10" fill="none" stroke="#4f80e8"/><path d="M44 15c5 0 1-9 6-11" fill="none" stroke="#29a593" stroke-width="1.500" stroke-dasharray="2 1"/><path d="M50 15c6 0 2-10 7-12" fill="none" stroke="#405d9c" stroke-width="1.500"/><path d="M47 9h3V6l5 3.500-5 3V10h-3z" fill="#1c7a72"/></svg>Interpolation_Curve</div>
      </div>

      <div class="splitter flex-shrink-0"></div>

      <div class="box flex-fill d-flex no-min">
        <div class="flex-fill overflow-hidden">
          <table class="props w-100">
            <thead><tr><th>Özellik</th><th>Değer</th></tr></thead>
            <tbody>
              <tr class="sec"><th colspan="2">Baz</th></tr>
              <tr class="alt"><th><svg class="twisty"><path d="M3 1l4 4-4 4" fill="none" stroke="#888" stroke-width="2"/></svg>Placement</th><td>[(0,00 0,00 1,00); 0,00 °; (0,00 mm</td></tr>
              <tr class="last-leaf"><th>Label</th><td>Interpolation_Curve</td></tr>
              <tr class="sec"><th colspan="2">General</th></tr>
              <tr><th>Custom Tangents</th><td>false</td></tr>
              <tr class="alt"><th>Detect Aligned</th><td>false</td></tr>
              <tr><th>Periodic</th><td>false</td></tr>
              <tr class="alt"><th>Point List</th><td>Sketch [Vertex8, Vertex9, Vertex10 ...]</td></tr>
              <tr><th>Polygonal</th><td>false</td></tr>
              <tr class="alt"><th>Tangents</th><td>[0,33 -0,00 -0,95], ...</td></tr>
              <tr class="last-leaf"><th>Tolerance</th><td>0,00</td></tr>
              <tr class="sec"><th colspan="2">Parameters</th></tr>
              <tr class="alt hot"><th><label for="paramList">Parameters</label></th><td><div class="d-flex"><input id="paramList" class="edit-line border-0 flex-fill" value="[0.00 0.20 0.40 0.60 0.80 1.00]"><button class="more" aria-label="Listeyi düzenle">...</button></div></td></tr>
              <tr class="alt last-leaf"><th>Parametrization</th><td>Custom</td></tr>
              <tr class="sec"><th colspan="2">Spiral</th></tr>
              <tr class="alt"><th>Face Support</th><td></td></tr>
              <tr><th>UTurns</th><td>0</td></tr>
            </tbody>
          </table>
        </div>
        <div class="scroll-lane d-flex flex-column align-items-center">
          <div class="head-row w-100 flex-shrink-0"></div>
          <div class="scroll-thumb flex-fill"></div>
          <svg width="12" height="8" class="flex-shrink-0"><path d="M2 1l4 4 4-4" fill="none" stroke="#666" stroke-width="2"/></svg>
        </div>
      </div>

      <nav class="foot-tabs d-flex flex-shrink-0"><a href="#" class="foot-off text-center">Görünüm</a><a href="#" class="foot-on text-center">Veri</a><span class="foot-fill flex-fill"></span></nav>
      <div class="mark-rows position-absolute"></div>
      <div class="mark-more position-absolute"></div>
      <svg class="mark-lead position-absolute" viewBox="0 0 20 140"><path d="M9.500 9v124" stroke="#ff9340" stroke-width="2.500"/><circle cx="9.500" cy="9" r="7" fill="#fb8f0d"/></svg>
    </section>

    <section class="flex-fill d-flex flex-column no-min">
      <div class="scene flex-fill no-min">
        <!-- 3D view: sketch lines, interpolated curve, navigation cube and axis cross -->
        <svg class="w-100 h-100 d-block" viewBox="442 125 628 569">
          <g stroke="#fff" stroke-width="1" shape-rendering="crispEdges"><path d="M679.500 321v312M680 321.500h335M680 383.500h345M680 445.500h335M680 508.500h299M680 571.500h213"/></g>
          <path d="M1015 321C1021 341 1025 362 1025 384C1025 406 1022 427 1015 446C1007 469 995 490 979 509C959 532 929 554 893 571C835 599 760 618 680 633" fill="none" stroke="#2a9f3c" stroke-width="1.300"/>
          <path fill="#fff" d="M675 316h10v10h-10zM675 379h10v10h-10zM675 441h10v10h-10zM675 504h10v10h-10zM675 566h10v10h-10zM675 628h10v10h-10zM1010 316h10v10h-10zM1020 379h10v10h-10zM1010 441h10v10h-10zM974 504h10v10h-10zM888 566h10v10h-10z"/>
          <g fill="#9190af"><path d="M987 134l12 12h-24zM913 208l12-12v24zM1061 208l-12-12v24zM987 282l-12-12h24z"/><circle cx="1055.500" cy="140" r="6.500"/>
            <path d="M965 141L967 150C957 153 948 157 943 162L947 166L931 173L934 155L937 158C944 150 954 144 965 141ZM1009 141L1007 150C1017 153 1026 157 1031 162L1027 166L1043 173L1040 155L1037 158C1030 150 1020 144 1009 141Z"/></g>
          <path d="M960 172h54l9 9v54l-9 9h-54l-9-9v-54z" fill="#b6b9cc"/>
          <path d="M960 172l-9 9 8-2zM1014 172l9 9-7-2zM951 235l9 9-1-8zM1023 235l-9 9 2-8z" fill="#8588a3" stroke="#77799a" stroke-width=".7"/>
          <path d="M958.500 179.500h57v57h-57z" fill="#bdc1d6" stroke="#22222c"/>
          <text x="987" y="213" text-anchor="middle" font-family="Roboto, sans-serif" font-weight="700" font-size="13" fill="#15151c">FRONT</text>
          <path d="M944 189v62" stroke="#0c0cc0" stroke-width="2.500"/><path d="M945 250.500h61" stroke="#f01616" stroke-width="2"/><path d="M945 250l12-11" stroke="#33e84a" stroke-width="1.600"/>
          <path d="M1024.500 255l11.500 5v12l-11.500 5-11.500-5v-12z" fill="#8a8ba4"/><path d="M1013 260l11.500-5 11.500 5-11.500 4z" fill="#a0a1b8"/><path d="M1024.500 264l11.500-4v12l-11.500 5z" fill="#77789a"/>
          <path d="M1040 262h15l-7.500 7z" fill="#35354c"/>
          <g font-family="DejaVu Sans" font-weight="700" font-size="9" fill="#000"><text x="1042" y="646">Z</text><text x="1042" y="665">Y</text><text x="1061" y="665">X</text></g>
          <path d="M1042 648l2 5h-4z" fill="#22228c"/><circle cx="1042" cy="666" r="2" fill="#2a7c3a"/><path d="M1055 664l5 2-5 2z" fill="#8c2230"/>
        </svg>
      </div>
      <div class="doc-tabs d-flex flex-shrink-0">
        <div class="doc-tab d-flex align-items-center">
          <svg width="17" height="18" class="flex-shrink-0"><path d="M1 1h8v4H5v3h4v3H5v5H1z" fill="#c0161c" stroke="#7c0e12" stroke-width=".7"/><circle cx="11" cy="10" r="3.500" fill="none" stroke="#4569a5" stroke-width="2.600"/><circle cx="11" cy="10" r="5" fill="none" stroke="#4569a5" stroke-width="1.500" stroke-dasharray="2 2"/></svg>
          <a href="#" class="flex-fill doc-name">Curves_WB_Interpolate : 1*</a>
          <button class="btn p-0 border-0 me-2" aria-label="Sekmeyi kapat"><svg width="12" height="12" class="d-block"><path d="M1 1l10 10M11 1L1 11" stroke="#a0a0a0" stroke-width="2"/></svg></button>
        </div>
      </div>
    </section>

    <div class="list-dialog position-absolute d-flex flex-column" role="dialog" aria-label="Liste">
      <div class="list-title position-relative d-flex align-items-center justify-content-center flex-shrink-0 caption-text">Liste
        <button class="btn p-0 border-0 position-absolute" aria-label="Kapat"><svg width="18" height="18" class="d-block"><circle cx="9" cy="9" r="9" fill="#ee8635"/><path d="M6 6l6 6M12 6l-6 6" stroke="#fff" stroke-width="2.200"/></svg></button>
      </div>
      <div class="list-edit flex-fill d-flex">
        <div class="list-nums text-end">1<br>2<br>3<br>4<br>5<br>6</div>
        <textarea class="list-text flex-fill border-0" aria-label="Değerler">0.00
0.20
0.40
0.60
0.80
1.00</textarea>
      </div>
      <div class="list-actions d-flex justify-content-end">
        <button class="soft-btn w-cancel d-flex align-items-center justify-content-center gap-1"><svg width="14" height="16"><path d="M3 2c2 3 4 6 8 12M12 2C8 5 5 9 3 14" fill="none" stroke="#2b1f3c" stroke-width="4"/><path d="M3 2c2 3 4 6 8 12M12 2C8 5 5 9 3 14" fill="none" stroke="#b8394a" stroke-width="2"/></svg><span><u>C</u>ancel</span></button>
        <button class="soft-btn w-ok d-flex align-items-center justify-content-center gap-1"><svg width="16" height="16"><path d="M9 1h6v6c0 2-3 4-7 4v4L1 9l7-6v3z" fill="#6f7c62" stroke="#3b4334"/></svg><span><u>O</u>K</span></button>
      </div>
    </div>
  </main>

  <footer class="status d-flex align-items-center flex-shrink-0">
    <span class="flex-fill">Preselected: Curves_WB_Approximate.Interpolation_Curve.Edge1 (43.556980 mm, 0.000000 mm, 24.978456 mm)</span>
    <button class="soft-btn w-blend d-flex align-items-center justify-content-center gap-2"><svg width="10" height="14"><rect x="1" y="1" width="8" height="12" rx="3.500" fill="#fff" stroke="#333" stroke-width="2"/><path d="M5 3v4" stroke="#333" stroke-width="2"/></svg>Blender</button>
    <span>105,17 mm x 95,29 mm</span>
  </footer>
</div>

<script src="https://cdn.jsdelivr.net/npm/bootstrap@5.3.0/dist/js/bootstrap.bundle.min.js"></script>
<script>
  // Curves toolbar: "|" starts a new group with its own grip.
  const icons = ("| line editsp join sp1 sp1 sp1 sp3 sp2 sp4 blend comb fan " +
    "| zebra trim gfan map loft profile pipe sweep gordon segment coil ball compound reflect blendsurf rotsweep flat " +
    "| info cubeface cubegreen clip cubered net speed").split(" ");
  document.getElementById("curveTools").innerHTML = icons.map(n => n === "|"
    ? '<span class="grip"></span>'
    : `<button class="btn tool" aria-label="${n}"><svg><use href="#i-${n}"/></svg></button>`).join("");
</script>
</body>
</html>
